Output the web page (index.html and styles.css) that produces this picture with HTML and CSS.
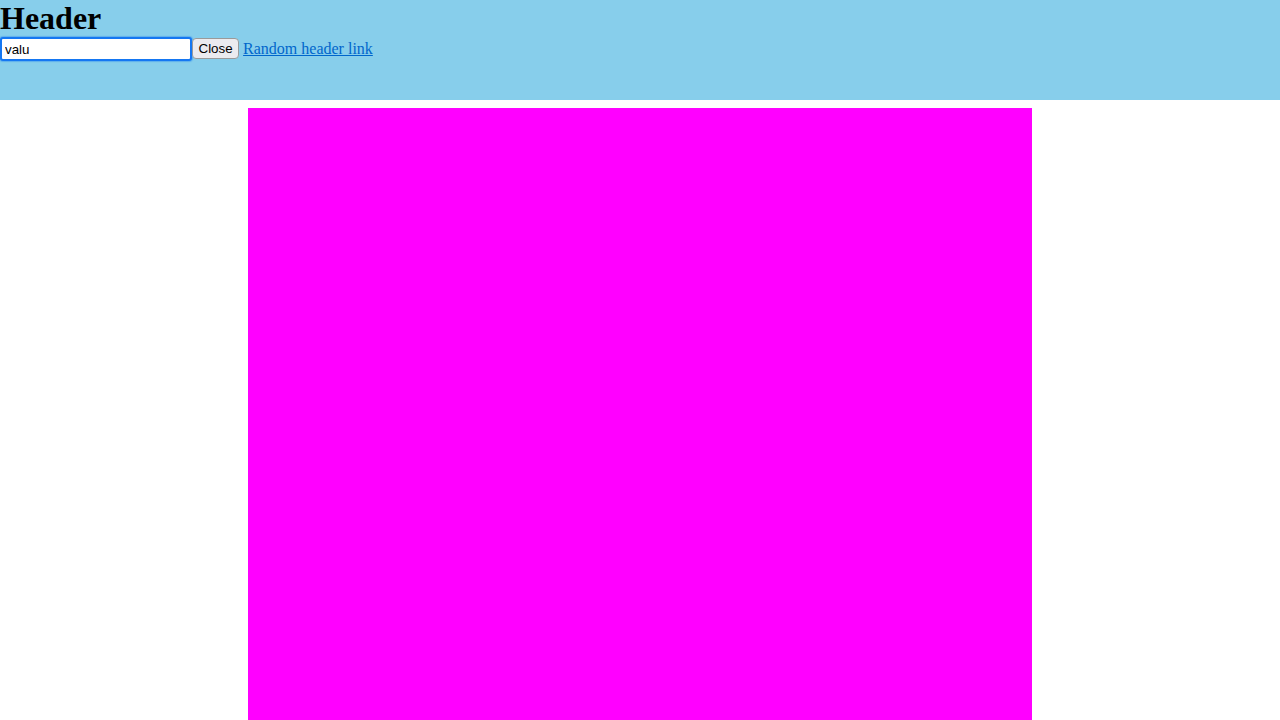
FILE: index.html
```html
<!DOCTYPE html>
<html>
<head>
<meta charset="utf-8">
<link rel="stylesheet" href="styles.css">
</head>
<body>
<header class="header">
<h1 class="title">Header</h1>
<div class="controls"><input class="field" type="text" value="valu"><button class="btn">Close</button> <a class="link" href="#">Random header link</a></div>
</header>
<main class="content"></main>
</body>
</html>
```
FILE: styles.css
```css
html, body {
  margin: 0;
  padding: 0;
  background: #fff;
  font-family: "Liberation Serif", "Times New Roman", serif;
  font-size: 16px;
}
.header {
  background: #87ceeb;
  height: 100px;
}
.title {
  margin: 0;
  font-size: 32px;
  font-weight: bold;
  line-height: 37px;
}
.controls {
  line-height: 24px;
}
.field {
  width: 192px;
  height: 24px;
  box-sizing: border-box;
  font-family: "Liberation Sans", Arial, sans-serif;
  font-size: 13.33px;
  margin: 0;
  padding: 1px 3px;
  border: 2px solid #1577f2;
  border-radius: 3px;
  box-shadow: 0 0 1px 1px rgba(21, 119, 242, 0.35);
  background: #fff;
  color: #000;
  outline: none;
  vertical-align: top;
}
.btn {
  font-family: "Liberation Sans", Arial, sans-serif;
  font-size: 13.33px;
  margin: 1px 0 0;
  height: 21px;
  padding: 0 5.5px;
  border: 1px solid #9a9a9a;
  border-radius: 4px;
  background: #ebebef;
  color: #000;
  vertical-align: top;
}
.link {
  color: #0066cc;
}
.content {
  display: block;
  width: 784px;
  height: 700px;
  margin: 8px auto 0;
  background: #ff00ff;
}
```
